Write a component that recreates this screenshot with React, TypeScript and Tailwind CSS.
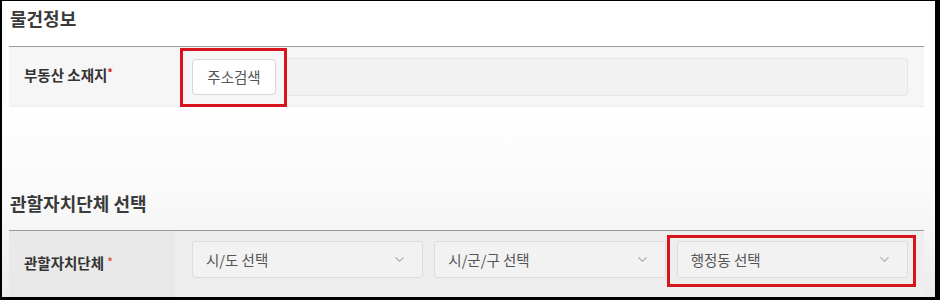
import React from "react";

const Chevron = () => (
  <svg width="9" height="5" viewBox="0 0 9 5" fill="none" className="shrink-0">
    <path d="M0.8 0.8 L4.5 4.2 L8.2 0.8" stroke="#b5b5b5" strokeWidth="1.3" strokeLinecap="round" strokeLinejoin="round" />
  </svg>
);

const Select = ({ label }: { label: string }) => (
  <div className="flex-1 h-[37px] flex items-center justify-between pl-[13px] pr-[18px] bg-[#f2f2f2] border border-[#dddddd] rounded-[3px] text-[14.5px] text-[#555555]">
    <span>{label}</span>
    <Chevron />
  </div>
);

export default function App() {
  return (
    <div
      className="w-[940px] h-[300px] bg-black pl-[2px] pt-[1px] pr-[5px] pb-[3px] overflow-hidden"
      style={{ fontFamily: '"Noto Sans CJK KR", "Noto Sans", sans-serif' }}
    >
      <div className="relative w-full h-full bg-white overflow-hidden">
        <div className="pl-[7px] pr-[11px]">
          {/* Section 1 */}
          <div className="h-[45px] pt-[5px] text-[18px] leading-[24px] font-semibold text-[#3a3a3a] pl-[1px]">
            물건정보
          </div>
          <div className="h-px bg-[#9a9a9a]" />
          <div className="h-[60px] flex items-center bg-[#f6f6f6] border-b border-[#ededed]">
            <div className="w-[166px] pl-[15px] text-[14.5px] font-bold text-[#333333] leading-none pb-[2px]">
              부동산 소재지<span className="text-[#d42020] text-[11px] align-top relative top-[-1px]">*</span>
            </div>
            <div className="flex-1 flex items-center pl-[17px] pr-[16px] gap-[8px]">
              <div className="w-[84px] h-[36px] flex items-center justify-center bg-white border border-[#d6d6d6] rounded-[4px] text-[14.5px] text-[#555555]">
                주소검색
              </div>
              <div className="flex-1 h-[38px] bg-[#f2f2f2] border border-[#e6e6e6] rounded-[3px]" />
            </div>
          </div>
        </div>

        {/* gradient gap + section 2 */}
        <div className="absolute inset-x-0 top-[107px] bottom-0 bg-gradient-to-b from-[#ffffff] via-[#f9f9f9] to-[#ececec]" />
        <div className="relative pl-[7px] pr-[11px]">
          <div className="h-[123px] pt-[84px] text-[18px] leading-[24px] font-semibold text-[#3a3a3a] pl-[1px]">
            관할자치단체 선택
          </div>
          <div className="h-px bg-[#9a9a9a]" />
          <div className="h-[70px] flex bg-[#eeeeee]">
            <div className="w-[166px] pl-[15px] pt-[22px] bg-[#e9e9e9] text-[14.5px] font-bold text-[#333333] leading-[20px]">
              관할자치단체 <span className="text-[#e0603f] text-[11px] align-top relative top-[-2px]">*</span>
            </div>
            <div className="flex-1 flex pt-[10px] pl-[17px] pr-[16px] gap-[11px]">
              <Select label="시/도 선택" />
              <Select label="시/군/구 선택" />
              <Select label="행정동 선택" />
            </div>
          </div>
        </div>

        {/* annotation highlights */}
        <div className="absolute left-[178px] top-[47px] w-[107px] h-[59px] border-[3px] border-[#d8141c]" />
        <div className="absolute left-[665px] top-[234px] w-[249px] h-[52px] border-[3px] border-[#d8141c]" />
      </div>
    </div>
  );
}
